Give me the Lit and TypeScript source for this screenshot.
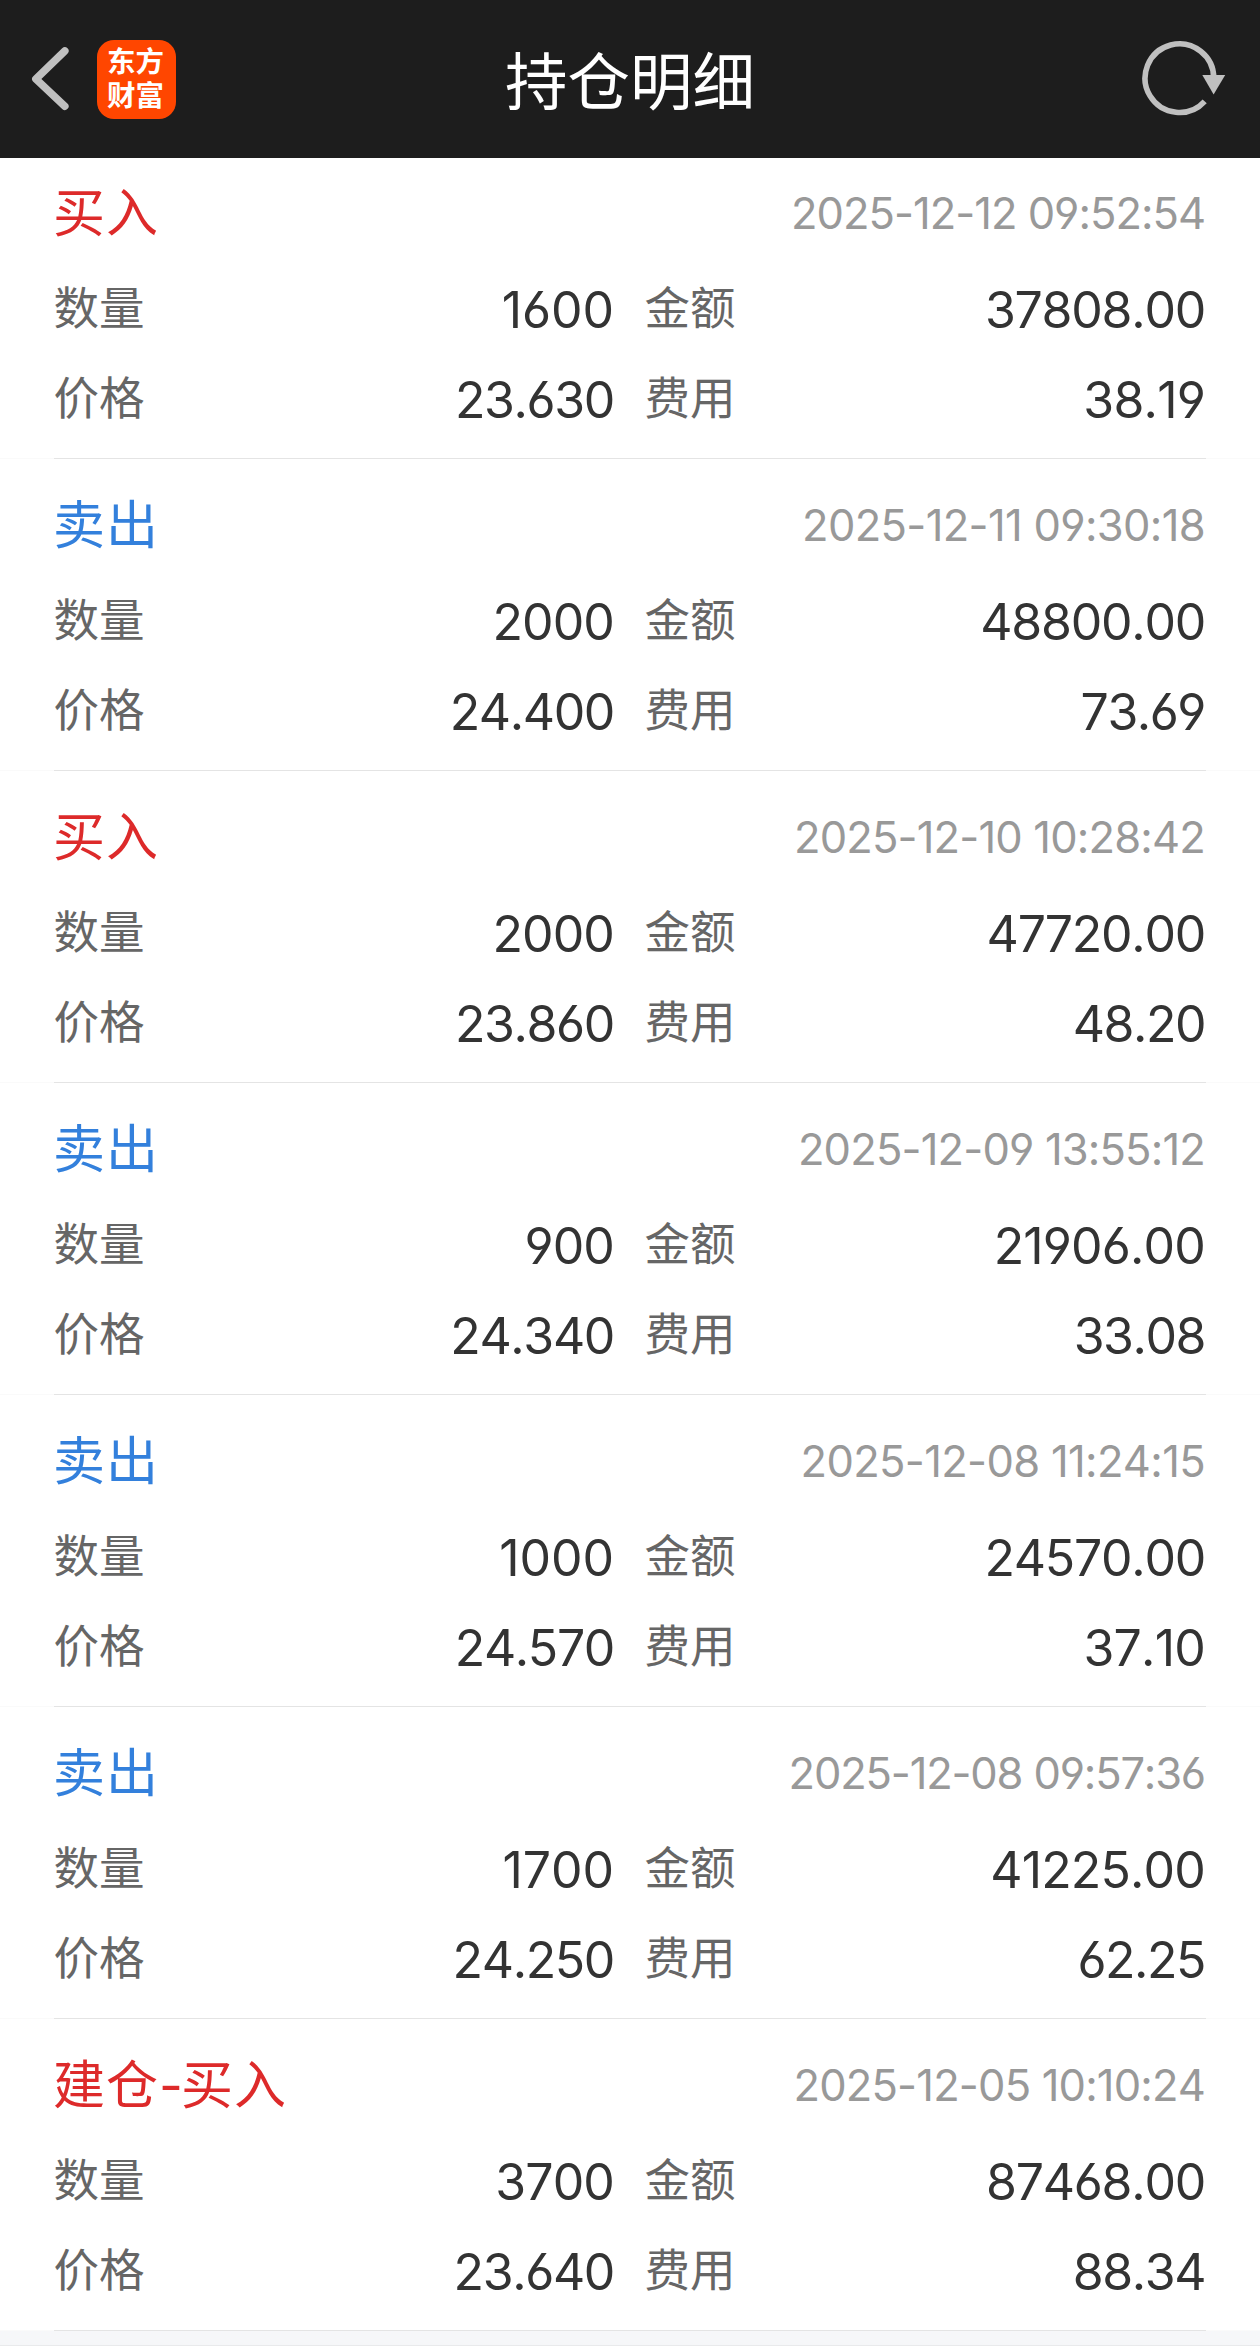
import { LitElement, html, css } from "lit";
import { customElement, property } from "lit/decorators.js";
import { classMap } from "lit/directives/class-map.js";
import { styleMap } from "lit/directives/style-map.js";

interface Trade {
  action: string;
  opening?: string;
  side: "buy" | "sell";
  time: string;
  quantity: string;
  amount: string;
  price: string;
  fee: string;
}

const TRADES: Trade[] = [
  { action: "买入", side: "buy", time: "2025-12-12 09:52:54", quantity: "1600", amount: "37808.00", price: "23.630", fee: "38.19" },
  { action: "卖出", side: "sell", time: "2025-12-11 09:30:18", quantity: "2000", amount: "48800.00", price: "24.400", fee: "73.69" },
  { action: "买入", side: "buy", time: "2025-12-10 10:28:42", quantity: "2000", amount: "47720.00", price: "23.860", fee: "48.20" },
  { action: "卖出", side: "sell", time: "2025-12-09 13:55:12", quantity: "900", amount: "21906.00", price: "24.340", fee: "33.08" },
  { action: "卖出", side: "sell", time: "2025-12-08 11:24:15", quantity: "1000", amount: "24570.00", price: "24.570", fee: "37.10" },
  { action: "卖出", side: "sell", time: "2025-12-08 09:57:36", quantity: "1700", amount: "41225.00", price: "24.250", fee: "62.25" },
  { action: "买入", opening: "建仓", side: "buy", time: "2025-12-05 10:10:24", quantity: "3700", amount: "87468.00", price: "23.640", fee: "88.34" },
];

/** Evens out figures: strings rich in narrow ones open up, those with a point close up. */
function tracking(text: string, base: number): string {
  const ones = text.split("1").length - 1;
  const dots = text.split(".").length - 1;
  return `${(base + (3.3 * ones - 2.8 * dots) / text.length).toFixed(2)}px`;
}

@customElement("trade-record")
export class TradeRecord extends LitElement {
  @property({ attribute: false }) trade!: Trade;

  static styles = css`
    :host {
      display: block;
      box-sizing: border-box;
      height: 312px;
      padding: 0 54px;
      border-bottom: 1px solid #fafafa;
    }
    .body {
      box-sizing: border-box;
      height: 312px;
      padding-top: 26px;
      border-bottom: 1px solid #e4e4e4;
    }
    .head {
      display: flex;
      justify-content: space-between;
      align-items: flex-start;
      height: 80px;
    }
    .action {
      margin-left: -1px;
      font-size: 52px;
      line-height: 74px;
      letter-spacing: 1px;
      color: #dd2a2a;
    }
    .action.sell {
      color: #3380dc;
    }
    .dash {
      margin-right: -2px;
      font-family: Inter, sans-serif;
      line-height: 1;
      letter-spacing: 0;
    }
    .time,
    .value {
      font-family: Inter, "Noto Sans CJK SC", sans-serif;
      font-feature-settings: "cv03", "cv04";
      font-kerning: none;
      margin-right: 1px;
    }
    .time {
      font-size: 43.5px;
      line-height: 80px;
      color: #999;
    }
    .grid {
      display: grid;
      grid-template-columns: 561px 561px;
      column-gap: 30px;
      grid-auto-rows: 90px;
      padding-top: 10px;
    }
    .cell {
      display: flex;
      justify-content: space-between;
      align-items: flex-start;
    }
    .label {
      margin-left: -0.5px;
      font-size: 45.5px;
      line-height: 84px;
      color: #666;
    }
    .value {
      font-size: 50px;
      line-height: 94px;
      color: #333;
    }
  `;

  private cell(label: string, value: string) {
    return html`<div class="cell">
      <span class="label">${label}</span>
      <span class="value" style=${styleMap({ letterSpacing: tracking(value, -0.9) })}>${value}</span>
    </div>`;
  }

  render() {
    const t = this.trade;
    return html`
      <div class="body">
        <div class="head">
          <span class=${classMap({ action: true, sell: t.side === "sell" })}
            >${t.opening ? html`${t.opening}<span class="dash">-</span>` : ""}${t.action}</span
          >
          <span class="time" style=${styleMap({ letterSpacing: tracking(t.time, -1.35) })}>${t.time}</span>
        </div>
        <div class="grid">
          ${this.cell("数量", t.quantity)} ${this.cell("金额", t.amount)}
          ${this.cell("价格", t.price)} ${this.cell("费用", t.fee)}
        </div>
      </div>
    `;
  }
}

@customElement("app-root")
export class AppRoot extends LitElement {
  static styles = css`
    :host {
      display: flex;
      flex-direction: column;
      height: 2346px;
      overflow: hidden;
      background: #fff;
      font-family: "Noto Sans CJK SC", sans-serif;
    }
    .bar {
      position: relative;
      z-index: 1;
      box-sizing: border-box;
      flex: none;
      display: grid;
      grid-template-columns: 1fr auto 1fr;
      align-items: center;
      height: 158px;
      padding: 0 28px;
      background: #1d1d1d;
    }
    .left {
      display: flex;
      align-items: center;
      gap: 25px;
    }
    .right {
      display: flex;
      justify-content: flex-end;
      padding-right: 4px;
    }
    svg {
      display: block;
    }
    .logo {
      box-sizing: border-box;
      display: flex;
      flex-direction: column;
      align-items: center;
      justify-content: center;
      width: 79px;
      height: 79px;
      padding: 0 2px 5px 0;
      border-radius: 17px;
      background: #ff4600;
      color: #fff;
      font-size: 28.5px;
      font-weight: 700;
      line-height: 34px;
    }
    .title {
      padding-bottom: 3px;
      font-size: 62.5px;
      line-height: 90px;
      color: #fff;
    }
    .list {
      flex: none;
      margin-top: -11px;
    }
    .foot {
      flex: none;
      height: 14px;
      background: #f6f7f9;
      border-bottom: 1px solid #e9eaec;
    }
  `;

  render() {
    return html`
      <header class="bar">
        <div class="left">
          <svg width="44" height="70" viewBox="0 0 44 70" fill="none" stroke="#c0c0c0" stroke-width="7.6" stroke-linecap="round" stroke-linejoin="round">
            <path d="M36.8 7 7.9 35 36.8 62.2" />
          </svg>
          <div class="logo"><span>东方</span><span>财富</span></div>
        </div>
        <div class="title">持仓明细</div>
        <div class="right">
          <svg width="88" height="80" viewBox="0 0 88 80">
            <path d="M73.7 40A34.3 34.3 0 1 0 64.7 62.3" fill="none" stroke="#c0c0c0" stroke-width="5.6" />
            <path d="M62.3 36H85.2L73.6 55.5Z" fill="#c0c0c0" />
          </svg>
        </div>
      </header>
      <main class="list">
        ${TRADES.map((t) => html`<trade-record .trade=${t}></trade-record>`)}
      </main>
      <div class="foot"></div>
    `;
  }
}
